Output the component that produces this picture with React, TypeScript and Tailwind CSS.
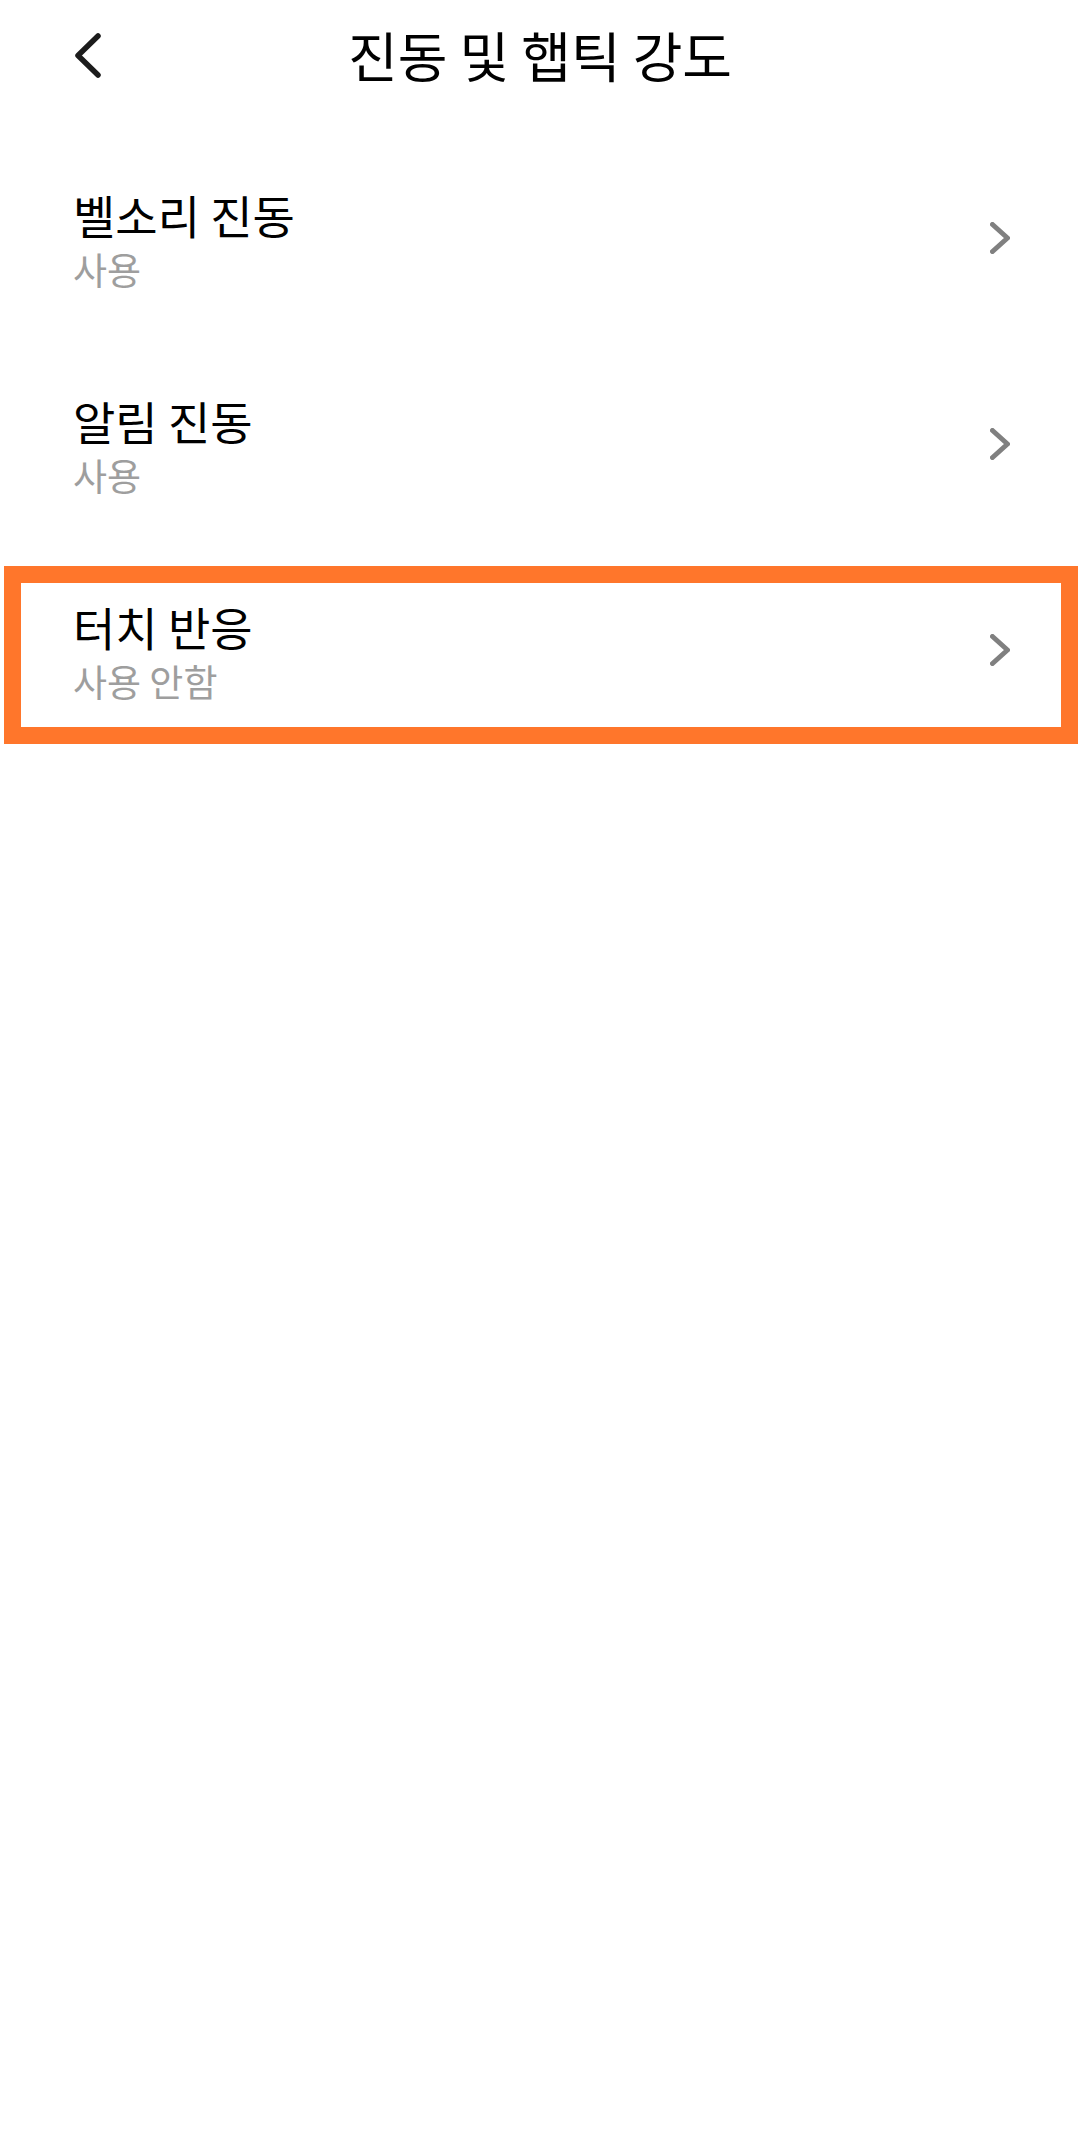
const ITEMS = [
  { title: "벨소리 진동", value: "사용", highlight: false },
  { title: "알림 진동", value: "사용", highlight: false },
  { title: "터치 반응", value: "사용 안함", highlight: true },
];

function BackIcon() {
  return (
    <svg width="26" height="45" viewBox="0 0 26 45" fill="none">
      <path
        d="M23 3 L3 22.5 L23 42"
        stroke="#1c1c1c"
        strokeWidth="5.5"
        strokeLinecap="round"
        strokeLinejoin="round"
      />
    </svg>
  );
}

function ChevronIcon() {
  return (
    <svg width="20" height="32" viewBox="0 0 20 32" fill="none">
      <path
        d="M2.5 2.5 L17.5 16 L2.5 29.5"
        stroke="#808080"
        strokeWidth="5"
        strokeLinecap="round"
        strokeLinejoin="round"
      />
    </svg>
  );
}

export default function App() {
  return (
    <div
      className="w-[1080px] h-[2152px] bg-white"
      style={{ fontFamily: '"Noto Sans CJK KR", "Noto Sans", sans-serif' }}
    >
      <header className="h-[110px] grid grid-cols-[1fr_auto_1fr] items-center">
        <div className="pl-[75px] flex items-center">
          <BackIcon />
        </div>
        <h1 className="text-[54px] leading-none text-black">진동 및 햅틱 강도</h1>
        <div />
      </header>

      <div className="mt-[44px] flex flex-col gap-[28px]">
        {ITEMS.map((item) => (
          <div
            key={item.title}
            className={
              "ml-[4px] mr-[2px] h-[178px] border-[17px] flex items-center justify-between pl-[52px] pr-[51px] pb-[10px] " +
              (item.highlight ? "border-[#ff762b]" : "border-transparent")
            }
          >
            <div className="flex flex-col">
              <span className="text-[46px] leading-[56px] text-black">{item.title}</span>
              <span className="mt-[5px] text-[37px] leading-[44px] text-[#9e9e9e]">{item.value}</span>
            </div>
            <ChevronIcon />
          </div>
        ))}
      </div>
    </div>
  );
}
